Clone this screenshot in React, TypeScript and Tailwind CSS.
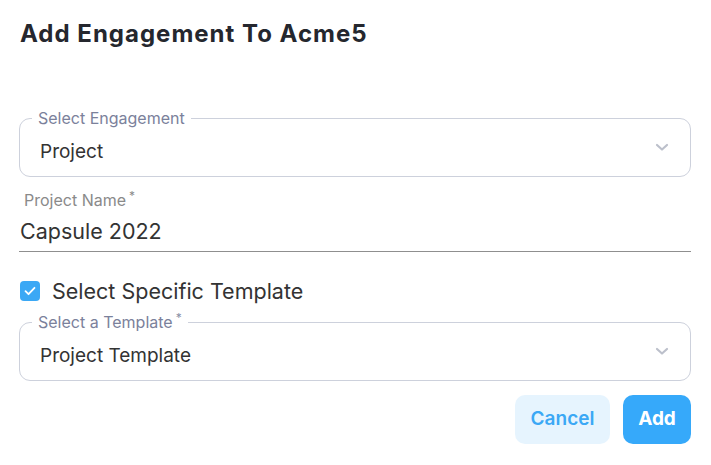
import React from "react";

function Chevron() {
  return (
    <svg width="14" height="9" viewBox="0 0 14 9" fill="none" className="text-[#bcc0cb]">
      <path d="M2 2l5 4.5L12 2" stroke="currentColor" strokeWidth="2.2" strokeLinecap="round" strokeLinejoin="round" />
    </svg>
  );
}

function SelectField({ label, value, required }: { label: string; value: string; required?: boolean }) {
  return (
    <div className="relative h-[59px] rounded-[11px] border border-[#cdd1dc] pl-[20px] pr-[21px] flex items-center justify-between">
      <span className="absolute left-[12px] -top-[10px] bg-white px-[6px] text-[16px] leading-[18px] text-[#7b819b]">
        {label}
        {required && <sup className="ml-[3px] text-[12px] text-[#8a8fa6]">*</sup>}
      </span>
      <span className="mt-[8px] text-[19px] leading-[24px] text-[#333333]">{value}</span>
      <Chevron />
    </div>
  );
}

export default function App() {
  return (
    <div className="w-[711px] h-[465px] bg-white px-[19px] pt-[19px]" style={{ fontFamily: "Inter, 'Noto Sans', sans-serif" }}>
      <h1 className="pl-[1px] text-[24px] leading-[30px] font-bold text-[#25272e] tracking-[1px]">Add Engagement To Acme5</h1>

      <div className="mt-[69px] w-[672px]">
        <SelectField label="Select Engagement" value="Project" />

        <div className="mt-[13px] pl-[5px] text-[16px] leading-[20px] text-[#8a8a8a]">
          Project Name<sup className="ml-[3px] text-[12px]">*</sup>
        </div>
        <div className="pl-[1px] pt-[8px] pb-[7px] text-[21.5px] leading-[26px] text-[#333333] border-b border-[#8f8f8f]">
          Capsule 2022
        </div>

        <label className="mt-[26px] h-[26px] flex items-center gap-[12px]">
          <span className="ml-[1px] w-[20px] h-[20px] rounded-[4px] bg-[#3ba8f5] flex items-center justify-center">
            <svg width="12" height="10" viewBox="0 0 12 10" fill="none">
              <path d="M1.5 5.2l3 3L10.5 1.8" stroke="white" strokeWidth="1.8" strokeLinecap="round" strokeLinejoin="round" />
            </svg>
          </span>
          <span className="text-[21.5px] leading-[26px] text-[#333333]">Select Specific Template</span>
        </label>

        <div className="mt-[18px]">
          <SelectField label="Select a Template" value="Project Template" required />
        </div>

        <div className="mt-[14px] flex justify-end gap-[13px]">
          <button className="w-[95px] h-[49px] rounded-[10px] bg-[#e6f4fe] text-[#3ba8f5] text-[19px] font-semibold">
            Cancel
          </button>
          <button className="w-[68px] h-[49px] rounded-[10px] bg-[#36a9fa] text-white text-[19px] font-bold">
            Add
          </button>
        </div>
      </div>
    </div>
  );
}
